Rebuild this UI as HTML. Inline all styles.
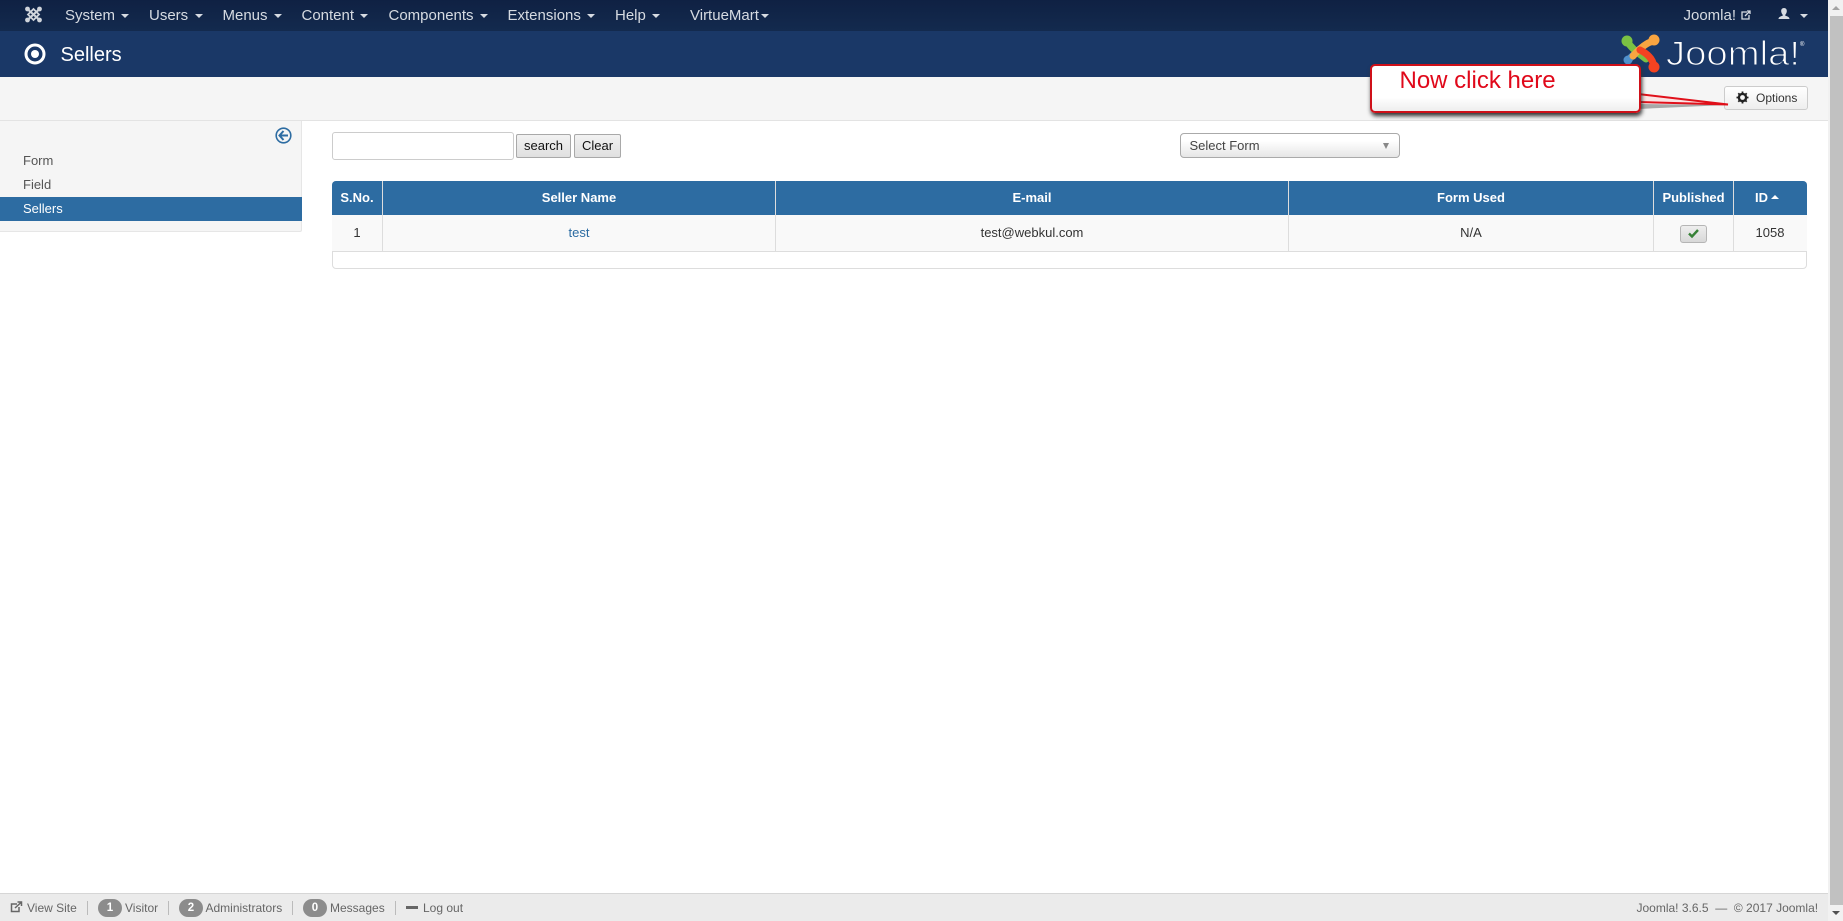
<!DOCTYPE html>
<html lang="en"><head><meta charset="utf-8"><title>Sellers</title>
<style>
html,body{margin:0;padding:0;width:1843px;height:921px;overflow:hidden;background:#fff;font-family:"Liberation Sans",sans-serif}
.a{position:absolute;white-space:nowrap}
.n{top:7px;font-size:15px;line-height:18px;color:#d6dbe2}
.c{position:absolute;width:0;height:0;border-left:4px solid transparent;border-right:4px solid transparent;border-top:4px solid #d6dbe2;top:14px}
.s{left:23px;font-size:13px;line-height:18px;color:#555}
.h{top:180px;height:35px;line-height:35px;text-align:center;font-size:13px;font-weight:bold;color:#fff}
.d{top:215px;height:36px;line-height:35px;text-align:center;font-size:13px;color:#333}
.v{position:absolute;width:1px}
.f{top:899px;font-size:12px;line-height:18px;color:#666}
.b{position:absolute;top:899px;height:18px;border-radius:9px;background:#8c8c8c;color:#fff;font-size:11.5px;font-weight:bold;line-height:18px;text-align:center}
.p{position:absolute;top:901px;width:1px;height:14px;background:#bbb}
.btn{box-sizing:border-box;top:134px;height:24px;line-height:22px;text-align:center;font-size:13px;color:#111;background:linear-gradient(#f2f2f2,#e0e0e0);border:1px solid #a9a9a9;border-radius:2px}
</style></head><body>
<div class="a" style="left:0;top:0;width:1828px;height:31px;background:linear-gradient(#0f2143,#132a4e)"></div>
<div class="a" style="left:0;top:31px;width:1828px;height:46px;background:#1a3867"></div>
<div class="a" style="left:0;top:77px;width:1828px;height:43px;background:#f5f5f5;border-bottom:1px solid #e3e3e3;box-sizing:content-box"></div>

<svg class="a" style="left:24px;top:6px" width="19" height="17" viewBox="0 0 19 17" fill="none" stroke="#cfd4db" stroke-linecap="round"><path d="M3.500 3 15.500 14M15.500 3 3.500 14" stroke-width="2.200"/><path d="M4 8.500 9.500 3 15 8.500 9.500 14Z" stroke-width="1.800"/><g fill="#cfd4db" stroke="none"><circle cx="3.500" cy="3" r="2.400"/><circle cx="15.500" cy="3" r="2.400"/><circle cx="3.500" cy="14" r="2.400"/><circle cx="15.500" cy="14" r="2.400"/></g></svg>
<div class="a n" style="left:65px">System</div><i class="c" style="left:121px"></i>
<div class="a n" style="left:149px">Users</div><i class="c" style="left:195px"></i>
<div class="a n" style="left:222.500px">Menus</div><i class="c" style="left:274px"></i>
<div class="a n" style="left:301.500px">Content</div><i class="c" style="left:360px"></i>
<div class="a n" style="left:388.500px">Components</div><i class="c" style="left:480px"></i>
<div class="a n" style="left:507.500px">Extensions</div><i class="c" style="left:587px"></i>
<div class="a n" style="left:615px">Help</div><i class="c" style="left:652px"></i>
<div class="a n" style="left:690px">VirtueMart</div><i class="c" style="left:761px"></i>
<div class="a n" style="left:1683.500px">Joomla!</div>
<svg class="a" style="left:1741px;top:10px" width="10" height="10" viewBox="0 0 10 10" fill="none" stroke="#d6dbe2" stroke-width="1.300"><path d="M6 2H1V9H8V5M4 6 9 1M6 1H9V4"/></svg>
<svg class="a" style="left:1778px;top:8px" width="12" height="12" viewBox="0 0 12 12" fill="#d6dbe2"><path d="M6 0C8 0 9 1.500 8.800 3.500 8.600 5 8 6 7.300 6.700V7.700C8.800 8.200 11.500 8.600 11.500 11H.5C.5 8.600 3.200 8.200 4.700 7.700V6.700C4 6 3.400 5 3.200 3.500 3 1.500 4 0 6 0Z"/></svg>
<i class="c" style="left:1800px"></i>

<svg class="a" style="left:24px;top:43px" width="22" height="22" viewBox="0 0 22 22" fill="none"><circle cx="11" cy="11" r="9" stroke="#fff" stroke-width="3"/><circle cx="11" cy="11" r="4" fill="#fff"/></svg>
<div class="a" style="left:60.500px;top:43px;font-size:20px;line-height:24px;color:#fff">Sellers</div>

<svg class="a" style="left:1620px;top:33px" width="190" height="42" viewBox="0 0 190 42" fill="none" stroke-linecap="round" stroke-linejoin="round">
<path d="M8 27 20 16" stroke="#5091cd" stroke-width="7"/><circle cx="8" cy="27" r="4.500" fill="#5091cd"/>
<path d="M7 8C11 15 17 19 26 26" stroke="#7ac143" stroke-width="7"/><circle cx="7" cy="8" r="5.500" fill="#7ac143"/>
<path d="M34 8C28 9 21 14 13 23" stroke="#f9a541" stroke-width="7"/><circle cx="34" cy="7" r="5.500" fill="#f9a541"/>
<path d="M20 17C26 20 33 25 34 34" stroke="#f44321" stroke-width="7"/><circle cx="34" cy="34" r="5.500" fill="#f44321"/>
<text x="46" y="32" font-family="Liberation Sans" font-size="34" fill="#fff" stroke="#1a3867" stroke-width="1.100" textLength="134" lengthAdjust="spacingAndGlyphs">Joomla!</text>
<text x="180" y="13" font-family="Liberation Sans" font-size="6" fill="#fff">®</text>
</svg>

<div class="a" style="left:1724px;top:86px;box-sizing:border-box;width:84px;height:24px;background:linear-gradient(#fff,#eee);border:1px solid #ccc;border-radius:3px;font-size:12px;line-height:22px;color:#333;padding-left:31px">Options</div>
<svg class="a" style="left:1736px;top:91px" width="13" height="13" viewBox="0 0 13 13" fill="none"><circle cx="6.500" cy="6.500" r="3.600" stroke="#222" stroke-width="2.400"/><path d="M6.500 .5V12.500M.5 6.500H12.500M2.300 2.300 10.700 10.700M10.700 2.300 2.300 10.700" stroke="#222" stroke-width="1.800" stroke-dasharray="2.200 7.600 2.200"/></svg>

<svg class="a" style="left:1630px;top:85px;z-index:2" width="100" height="30" viewBox="0 0 100 30"><path d="M8 19 97 20 8 24Z" fill="#888" opacity=".7"/><path d="M8 9 98 19.500 8 17Z" fill="#fbe4e4" stroke="#e0101a" stroke-width="2"/></svg>
<div class="a" style="left:1370px;top:64px;box-sizing:border-box;width:271px;height:49px;background:linear-gradient(#fff 70%,#eee);border:2.500px solid #cf1019;border-radius:5px;box-shadow:1px 3px 4px #333;z-index:3"></div>
<div class="a" style="left:1399.500px;top:66px;font-size:24px;line-height:30px;color:#e0081a;z-index:4">Now click here</div>

<div class="a" style="left:0;top:121px;width:301px;height:110px;background:#f5f5f5;border-right:1px solid #e6e6e6;border-bottom:1px solid #e6e6e6;border-radius:0 0 2px 0"></div>
<svg class="a" style="left:275px;top:127px" width="17" height="17" viewBox="0 0 17 17" fill="none" stroke="#2d6ca2"><circle cx="8.500" cy="8.500" r="7.300" stroke-width="1.600"/><path d="M8.500 4 4.500 8.500 8.500 13M4.800 8.500H13" stroke-width="2"/></svg>
<div class="a s" style="top:152px">Form</div>
<div class="a s" style="top:176px">Field</div>
<div class="a" style="left:0;top:197px;width:302px;height:24px;background:#2d6ca2"></div>
<div class="a s" style="top:200px;color:#fff">Sellers</div>

<div class="a" style="left:332px;top:132px;box-sizing:border-box;width:182px;height:28px;background:#fff;border:1px solid #ccc;border-radius:3px"></div>
<div class="a btn" style="left:516px;width:55px">search</div>
<div class="a btn" style="left:574px;width:47px">Clear</div>

<div class="a" style="left:1180px;top:133px;box-sizing:border-box;width:220px;height:25px;background:linear-gradient(#fff 30%,#e6e6e6);border:1px solid #aaa;border-radius:4px;font-size:13px;line-height:23px;color:#444;padding-left:8.500px">Select Form</div>
<div class="a" style="left:1383px;top:143px;width:0;height:0;border-left:3.500px solid transparent;border-right:3.500px solid transparent;border-top:6px solid #888"></div>

<div class="a" style="left:332px;top:181px;box-sizing:border-box;width:1475px;height:88px;border:1px solid #ddd;border-radius:4px"></div>
<div class="a" style="left:331.500px;top:181px;width:1475px;height:34px;background:#2d6ca2;border-radius:4px 4px 0 0"></div>
<div class="a" style="left:332px;top:215px;width:1475px;height:37px;background:#f9f9f9;border-bottom:1px solid #ddd;box-sizing:border-box"></div>
<i class="v" style="left:382px;top:181px;height:70px;background:#ddd"></i>
<i class="v" style="left:775px;top:181px;height:70px;background:#ddd"></i>
<i class="v" style="left:1288px;top:181px;height:70px;background:#ddd"></i>
<i class="v" style="left:1653px;top:181px;height:70px;background:#ddd"></i>
<i class="v" style="left:1733px;top:181px;height:70px;background:#ddd"></i>

<div class="a h" style="left:332px;width:50px">S.No.</div>
<div class="a h" style="left:383px;width:392px">Seller Name</div>
<div class="a h" style="left:776px;width:512px">E-mail</div>
<div class="a h" style="left:1289px;width:364px">Form Used</div>
<div class="a h" style="left:1654px;width:79px">Published</div>
<div class="a h" style="left:1755px">ID</div>
<div class="a" style="left:1771px;top:195px;width:0;height:0;border-left:4px solid transparent;border-right:4px solid transparent;border-bottom:4px solid #fff"></div>

<div class="a d" style="left:332px;width:50px">1</div>
<div class="a d" style="left:383px;width:392px;color:#2d6ca2">test</div>
<div class="a d" style="left:776px;width:512px">test@webkul.com</div>
<div class="a d" style="left:1289px;width:364px">N/A</div>
<div class="a d" style="left:1734px;width:72px">1058</div>
<div class="a" style="left:1680px;top:225px;box-sizing:border-box;width:27px;height:18px;background:linear-gradient(#eee,#d8d8d8);border:1px solid #b5b5b5;border-radius:3px"></div>
<svg class="a" style="left:1687px;top:228px" width="13" height="11" viewBox="0 0 13 11" fill="none"><path d="M2 5.500 5 8.500 11 2" stroke="#378137" stroke-width="2.400"/></svg>

<div class="a" style="left:0;top:893px;width:1828px;height:28px;box-sizing:border-box;background:#ebebeb;border-top:1px solid #d6d6d6"></div>
<svg class="a" style="left:10px;top:901px" width="13" height="12" viewBox="0 0 13 12" fill="none" stroke="#666" stroke-width="1.500"><path d="M7 3H1.500V10.500H9V6M5 7 11 1.500M7.500 1H11.500V5"/></svg>
<div class="a f" style="left:27px">View Site</div><i class="p" style="left:87px"></i>
<div class="b" style="left:98px;width:24px">1</div><div class="a f" style="left:125px">Visitor</div><i class="p" style="left:168px"></i>
<div class="b" style="left:179px;width:24px">2</div><div class="a f" style="left:205.500px">Administrators</div><i class="p" style="left:292px"></i>
<div class="b" style="left:303px;width:24px">0</div><div class="a f" style="left:330px">Messages</div><i class="p" style="left:395px"></i>
<div class="a" style="left:406px;top:906px;width:12px;height:2.500px;background:#666"></div>
<div class="a f" style="left:423px">Log out</div>
<div class="a f" style="left:1636.500px">Joomla! 3.6.5 &nbsp;—&nbsp; © 2017 Joomla!</div>

<div class="a" style="left:1828px;top:0;width:15px;height:921px;background:#f1f1f1"></div>
<div class="a" style="left:1830px;top:16px;width:13px;height:889px;background:#c1c1c1"></div>
<div class="a" style="left:1832px;top:6px;width:0;height:0;border-left:4px solid transparent;border-right:4px solid transparent;border-bottom:4px solid #a3a3a3"></div>
<div class="a" style="left:1832px;top:911px;width:0;height:0;border-left:4px solid transparent;border-right:4px solid transparent;border-top:4px solid #505050"></div>
</body></html>
